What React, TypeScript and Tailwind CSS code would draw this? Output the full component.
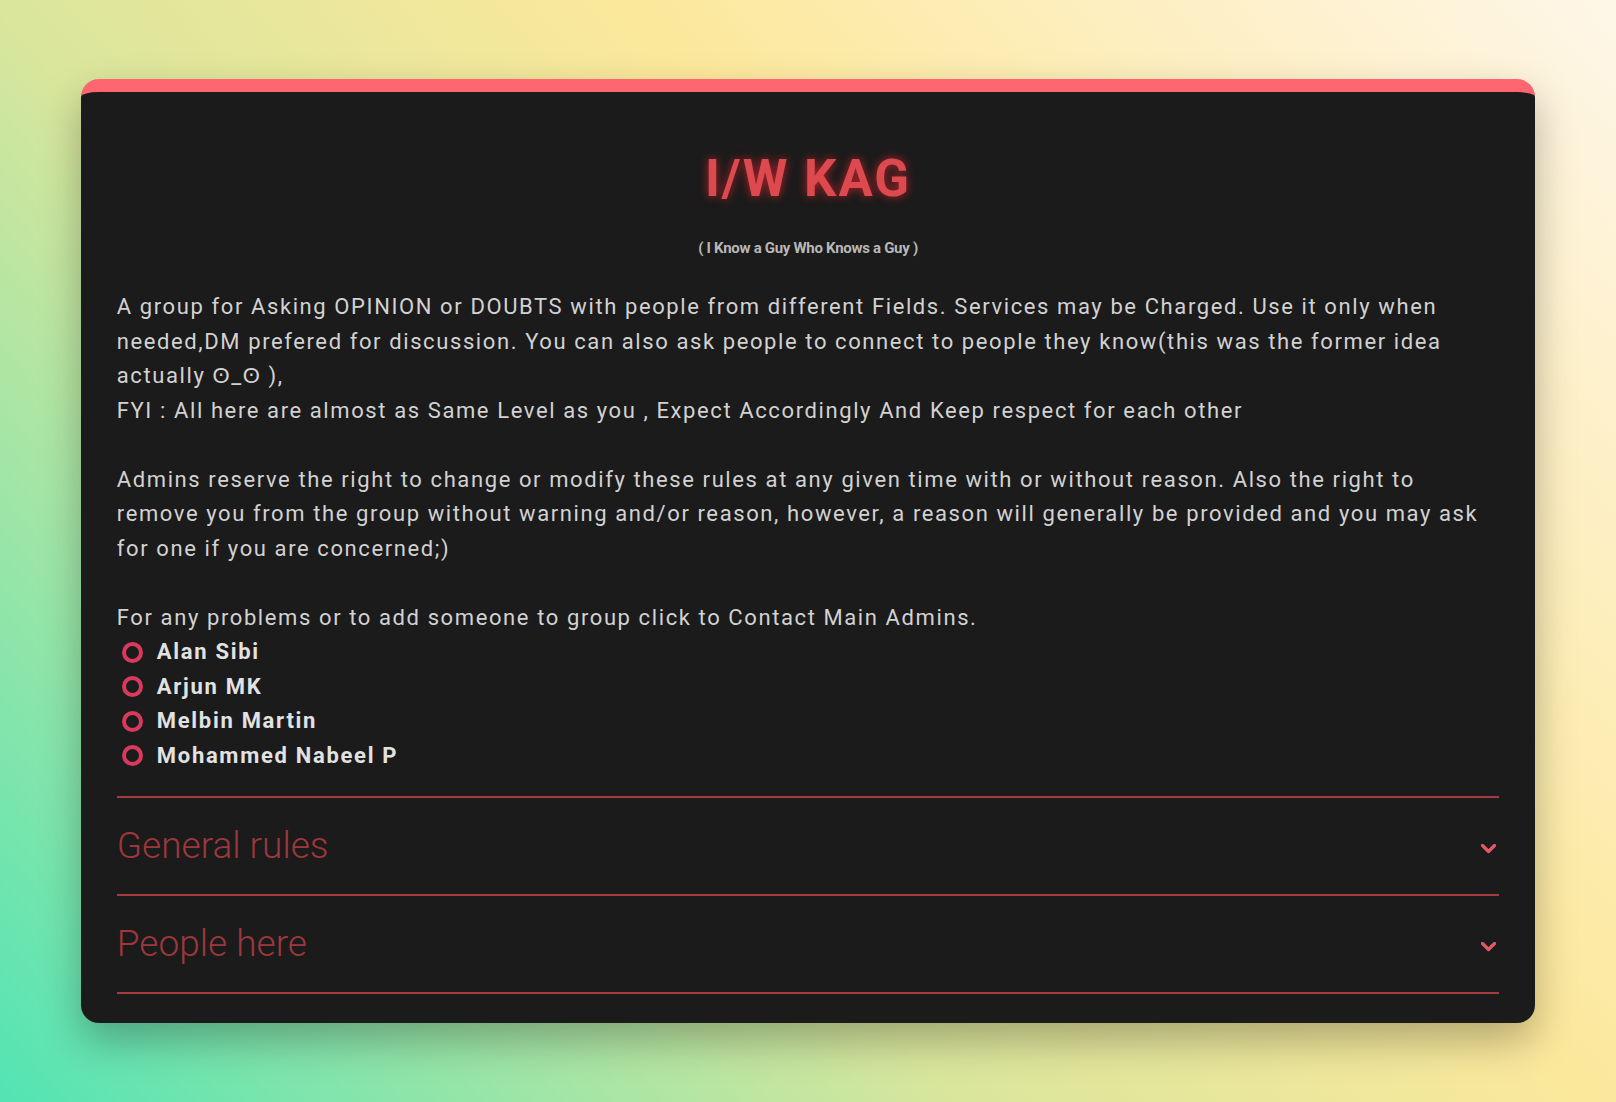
const admins = ["Alan Sibi", "Arjun MK", "Melbin Martin", "Mohammed Nabeel P"];
const sections = ["General rules", "People here"];

function Chevron() {
  return (
    <svg width="15" height="10" viewBox="0 0 15 10" fill="none" className="mr-[3px] mt-[6px]">
      <polyline points="1.5,1.5 7.5,7.5 13.5,1.5" stroke="#e25a64" strokeWidth="3.2" strokeLinecap="round" strokeLinejoin="round" />
    </svg>
  );
}

export default function App() {
  return (
    <div className="min-h-screen w-full bg-[linear-gradient(48.7deg,#52e4b4_0%,#d9e69c_37%,#fce89b_62%,#fef6e8_100%)] pt-[79px] pb-[79px] font-['Roboto',sans-serif]">
      <div className="mx-auto w-[90%] rounded-[18px] border-t-[13px] border-t-[#ff6670] bg-[#1b1b1b] px-[36px] pb-[29px] pt-[61px] shadow-[0_18px_40px_rgba(0,0,0,0.28)]">
        <h1 className="text-center text-[51px] font-bold leading-none tracking-[2px] text-[#dc4a50] [text-shadow:0_0_10px_rgba(255,40,50,0.7)]">
          I/W KAG
        </h1>
        <p className="mt-[37px] text-center text-[15px] font-bold leading-none tracking-[-0.3px] text-[#b8b8b8]">
          ( I Know a Guy Who Knows a Guy )
        </p>

        <div className="mt-[34px] text-[22px] leading-[34.5px] tracking-[1.6px] text-[#d2d2d2]">
          A group for Asking OPINION or DOUBTS with people from different Fields. Services may be Charged. Use it only when
          needed,DM prefered for discussion. You can also ask people to connect to people they know(this was the former idea
          actually ʘ_ʘ ),
          <br />
          FYI : All here are almost as Same Level as you , Expect Accordingly And Keep respect for each other
          <br />
          <br />
          Admins reserve the right to change or modify these rules at any given time with or without reason. Also the right to
          remove you from the group without warning and/or reason, however, a reason will generally be provided and you may ask
          for one if you are concerned;)
          <br />
          <br />
          For any problems or to add someone to group click to Contact Main Admins.
          <ul>
            {admins.map((name) => (
              <li key={name} className="flex items-center gap-[14px] pl-[5px]">
                <span className="h-[21px] w-[21px] shrink-0 rounded-full border-[4px] border-[#d8395c]" />
                <span className="text-[22px] font-bold tracking-[1.7px] text-[#e2e2e2]">{name}</span>
              </li>
            ))}
          </ul>
        </div>

        <div className="mt-[23px] border-b-2 border-[#a23c40]">
          {sections.map((title) => (
            <div key={title} className="flex h-[98px] items-center justify-between border-t-2 border-[#a23c40]">
              <span className="text-[37px] font-light text-[#9c383c]">{title}</span>
              <Chevron />
            </div>
          ))}
        </div>
      </div>
    </div>
  );
}
